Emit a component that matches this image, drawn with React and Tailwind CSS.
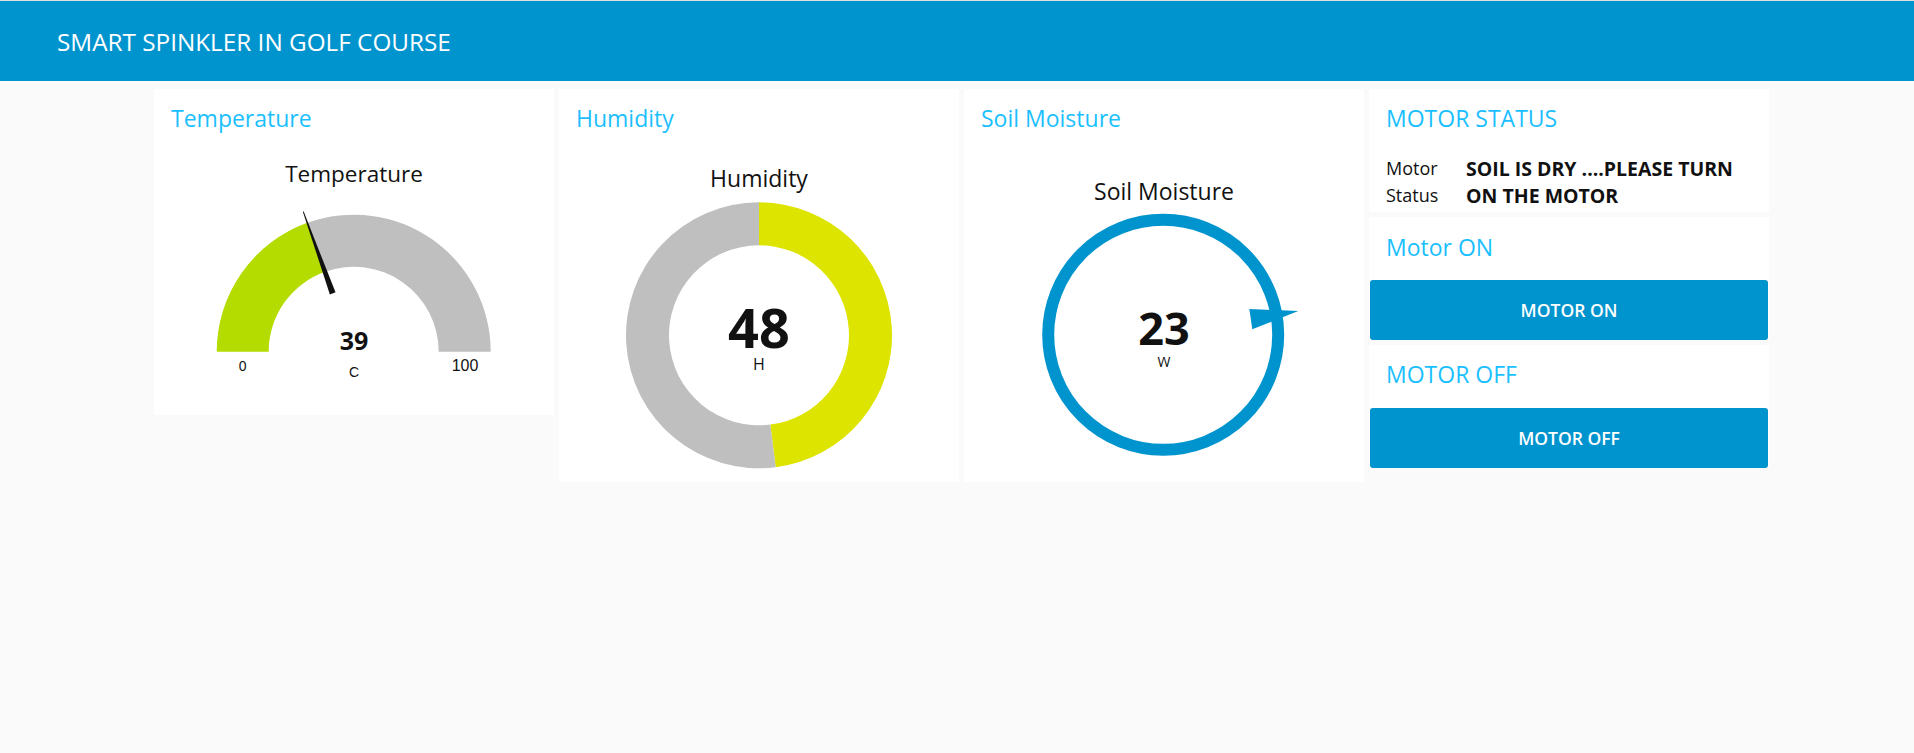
import React from "react";

const FONT = { fontFamily: '"Open Sans", "Noto Sans", sans-serif' };
const ARIAL = '"Liberation Sans", Arial, sans-serif';
const SANS = '"Open Sans", "Noto Sans", sans-serif';

function pt(cx, cy, r, deg) {
  const a = (deg * Math.PI) / 180;
  return [cx + r * Math.sin(a), cy - r * Math.cos(a)];
}

function sector(cx, cy, r0, r1, a0, a1) {
  const large = a1 - a0 > 180 ? 1 : 0;
  const [x1, y1] = pt(cx, cy, r1, a0);
  const [x2, y2] = pt(cx, cy, r1, a1);
  const [x3, y3] = pt(cx, cy, r0, a1);
  const [x4, y4] = pt(cx, cy, r0, a0);
  return `M${x1} ${y1} A${r1} ${r1} 0 ${large} 1 ${x2} ${y2} L${x3} ${y3} A${r0} ${r0} 0 ${large} 0 ${x4} ${y4} Z`;
}

function Title({ children, pt: ptClass = "pt-[14px]", h = "h-[48px]" }) {
  return (
    <div className={`pl-[17px] ${ptClass} ${h} text-[23px] leading-[30px] text-[#1bbfff]`}>
      {children}
    </div>
  );
}

function TempGauge() {
  const cx = 199.7;
  const cy = 214.7;
  const v = 39;
  const ang = -90 + (v / 100) * 180;
  const u = [Math.sin((ang * Math.PI) / 180), -Math.cos((ang * Math.PI) / 180)];
  const p = [-u[1], u[0]];
  const b = [cx + 62 * u[0], cy + 62 * u[1]];
  const t = [cx + 149 * u[0], cy + 149 * u[1]];
  const w = 3;
  const tw = 0.4;
  const needle = `${b[0] + p[0] * w},${b[1] + p[1] * w} ${t[0] + p[0] * tw},${t[1] + p[1] * tw} ${t[0] - p[0] * tw},${t[1] - p[1] * tw} ${b[0] - p[0] * w},${b[1] - p[1] * w}`;
  return (
    <svg width="400" height="278" viewBox="0 0 400 278">
      <text x="200" y="44.5" textAnchor="middle" fontFamily={SANS} fontSize="22.5" fill="#111">
        Temperature
      </text>
      <path d={sector(cx, cy, 85, 137, -90, ang)} fill="#b4dc00" />
      <path d={sector(cx, cy, 85, 137, ang, 90)} fill="#bfbfbf" />
      <polygon points={needle} fill="#111" />
      <text x="200" y="213" textAnchor="middle" fontFamily={SANS} fontWeight="700" fontSize="25" fill="#111">
        39
      </text>
      <text x="88.7" y="234" textAnchor="middle" fontFamily={ARIAL} fontSize="14" fill="#111">
        0
      </text>
      <text x="311" y="234" textAnchor="middle" fontFamily={ARIAL} fontSize="16" fill="#111">
        100
      </text>
      <text x="200" y="239.7" textAnchor="middle" fontFamily={ARIAL} fontSize="14" fill="#111">
        C
      </text>
    </svg>
  );
}

function HumidityDonut() {
  const cx = 200;
  const cy = 198.3;
  const a = 0.48 * 360;
  return (
    <svg width="400" height="345" viewBox="0 0 400 345">
      <text x="200" y="49.7" textAnchor="middle" fontFamily={SANS} fontSize="23" fill="#111">
        Humidity
      </text>
      <path d={sector(cx, cy, 90, 133, 0, a)} fill="#dde400" />
      <path d={sector(cx, cy, 90, 133, a, 359.999)} fill="#bfbfbf" />
      <text x="200" y="211.3" textAnchor="middle" fontFamily={SANS} fontWeight="700" fontSize="54" fill="#111">
        48
      </text>
      <text x="200" y="233" textAnchor="middle" fontFamily={SANS} fontSize="16" fill="#111">
        H
      </text>
    </svg>
  );
}

function SoilCompass() {
  return (
    <svg width="400" height="345" viewBox="0 0 400 345">
      <text x="200" y="63" textAnchor="middle" fontFamily={SANS} fontSize="23" fill="#111">
        Soil Moisture
      </text>
      <circle cx="199.2" cy="197.8" r="115" fill="none" stroke="#0094ce" strokeWidth="12" />
      <polygon points="285.3,172 334.3,174 288.3,192.3" fill="#0094ce" />
      <text x="200" y="208" textAnchor="middle" fontFamily={SANS} fontWeight="700" fontSize="45" fill="#111">
        23
      </text>
      <text x="200" y="229.7" textAnchor="middle" fontFamily={SANS} fontSize="14" fill="#111">
        W
      </text>
    </svg>
  );
}

export default function App() {
  return (
    <div className="min-h-[753px] bg-[#fafafa]" style={FONT}>
      <header className="h-[81px] border-t border-[#e0e0e0] bg-[#0094ce] pl-[57px] pt-[24px]">
        <div className="text-[24.3px] leading-[34px] text-white">SMART SPINKLER IN GOLF COURSE</div>
      </header>
      <main className="flex items-start gap-[5px] pl-[154px] pt-[8px]">
        <section className="flex h-[326px] w-[400px] flex-col bg-white">
          <Title>Temperature</Title>
          <TempGauge />
        </section>
        <section className="flex h-[393px] w-[400px] flex-col bg-white">
          <Title>Humidity</Title>
          <HumidityDonut />
        </section>
        <section className="flex h-[393px] w-[400px] flex-col bg-white">
          <Title>Soil Moisture</Title>
          <SoilCompass />
        </section>
        <div className="flex w-[400px] flex-col gap-[5px]">
          <section className="h-[123px] overflow-hidden bg-white">
            <Title>MOTOR STATUS</Title>
            <div className="mt-[18px] flex pl-[17px] text-[18px] leading-[27px] text-[#111]">
              <div className="w-[80px] shrink-0">
                Motor
                <br />
                Status
              </div>
              <div className="text-[19.5px] font-bold">
                SOIL IS DRY ....PLEASE TURN
                <br />
                ON THE MOTOR
              </div>
            </div>
          </section>
          <section className="flex h-[123px] flex-col bg-white">
            <Title pt="pt-[15px]" h="h-[63px]">Motor ON</Title>
            <button className="mx-[1px] flex h-[60px] items-center justify-center rounded-[3px] bg-[#0094ce] text-[17.5px] font-semibold text-white">
              MOTOR ON
            </button>
          </section>
          <section className="flex h-[123px] flex-col bg-white">
            <Title pt="pt-[14px]" h="h-[63px]">MOTOR OFF</Title>
            <button className="mx-[1px] flex h-[60px] items-center justify-center rounded-[3px] bg-[#0094ce] text-[17.5px] font-semibold text-white">
              MOTOR OFF
            </button>
          </section>
        </div>
      </main>
    </div>
  );
}
